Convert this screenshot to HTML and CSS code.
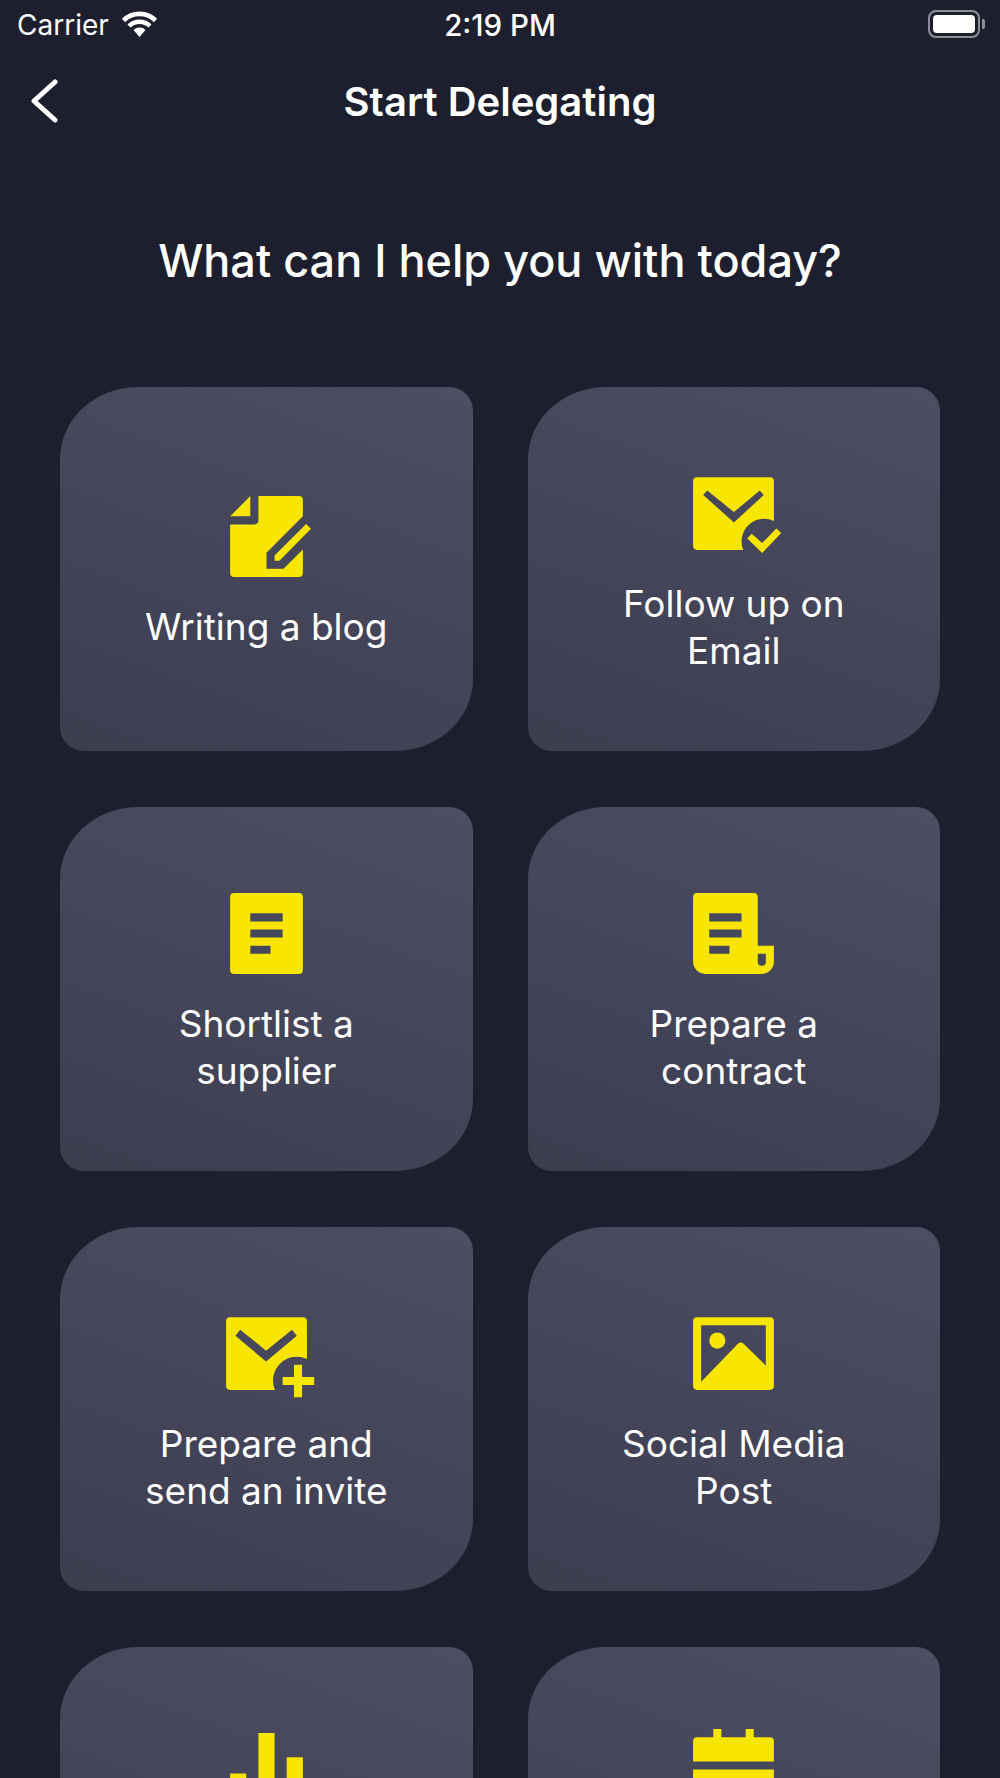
FILE: index.html
```html
<!DOCTYPE html>
<html lang="en">
<head>
    <meta charset="UTF-8">
    <meta name="viewport" content="width=device-width, initial-scale=1.0">
    <title>Start Delegating</title>
    <link rel="stylesheet" href="styles.css">
</head>
<body>
    <div class="status-bar">
        <div class="status-left">
            <span>Carrier</span>
            <svg class="wifi-icon" viewBox="0 0 37 26">
                <path d="M2.5 9.5a22.6 22.6 0 0 1 32 0" fill="none" stroke="#fff" stroke-width="4.8"/>
                <path d="M8 15a15 15 0 0 1 21 0" fill="none" stroke="#fff" stroke-width="4.4"/>
                <path d="M18.5 26l-6-7a8.5 8.5 0 0 1 12 0z" fill="#fff"/>
            </svg>
        </div>
        <span class="status-time">2:19 PM</span>
        <div class="battery">
            <div class="battery-level"></div>
        </div>
    </div>

    <nav class="navbar">
        <a class="back-btn" href="#" aria-label="Back">
            <svg viewBox="0 0 28 44"><path d="M25 3L4 22l21 19" fill="none" stroke="#fff" stroke-width="5" stroke-linecap="round" stroke-linejoin="round"/></svg>
        </a>
        <h1>Start Delegating</h1>
    </nav>

    <h2 class="question">What can I help you with today?</h2>

    <div class="card-grid">
        <div class="card">
            <svg class="card-icon" viewBox="0 0 24 24"><path d="M3 7L8 2V7z"/><path d="M10 2H20a1 1 0 0 1 1 1V7L12 16V20H16.2L21 15.2V21a1 1 0 0 1-1 1H4a1 1 0 0 1-1-1V9H9a1 1 0 0 0 1-1z"/><path d="M21.8 8.9L23 10.1 15.2 18H14V16.7z"/></svg>
            <p class="card-label">Writing a blog</p>
        </div>
        <div class="card">
            <svg class="card-icon" viewBox="0 0 24 24"><path fill-rule="evenodd" d="M3 3H21a1 1 0 0 1 1 1V13.84A5.6 5.6 0 0 0 14.41 21H3a1 1 0 0 1-1-1V4a1 1 0 0 1 1-1zM4.5 7.4L12.1 14.2 19.5 7.4 18.5 6.3 12.1 11.65 5.5 6.3z"/><path d="M15.4 18.2L16.5 17 19.1 19.3 22.6 15.7 23.8 16.8 19.1 21.8z"/></svg>
            <p class="card-label">Follow up on<br>Email</p>
        </div>
        <div class="card">
            <svg class="card-icon" viewBox="0 0 24 24"><path fill-rule="evenodd" d="M4 2H20a1 1 0 0 1 1 1V21a1 1 0 0 1-1 1H4a1 1 0 0 1-1-1V3a1 1 0 0 1 1-1zM8 7V9H16V7zM8 11V13H16V11zM8 15V17H13V15z"/></svg>
            <p class="card-label">Shortlist a<br>supplier</p>
        </div>
        <div class="card">
            <svg class="card-icon" viewBox="0 0 24 24"><path fill-rule="evenodd" d="M3 2H17a1 1 0 0 1 1 1V15H22V19a3 3 0 0 1-3 3H5a3 3 0 0 1-3-3V3a1 1 0 0 1 1-1zM6 7V9H14V7zM6 11V13H14V11zM6 15V17H11V15zM18 17V19a1 1 0 0 0 2 0V17z"/></svg>
            <p class="card-label">Prepare a<br>contract</p>
        </div>
        <div class="card">
            <svg class="card-icon" viewBox="0 0 24 24"><path fill-rule="evenodd" d="M3 3H21a1 1 0 0 1 1 1V13.36A5.9 5.9 0 0 0 14.07 21H3a1 1 0 0 1-1-1V4a1 1 0 0 1 1-1zM4.3 7.6L11.9 14 19.5 7.6 18.3 6.1 11.9 11.3 5.5 6.1z"/><path d="M16 17.8H18.8V14.8H20.8V17.8H23.8V19.8H20.8V22.8H18.8V19.8H16z"/></svg>
            <p class="card-label">Prepare and<br>send an invite</p>
        </div>
        <div class="card">
            <svg class="card-icon" viewBox="0 0 24 24"><path fill-rule="evenodd" d="M3 3H21a1 1 0 0 1 1 1V20a1 1 0 0 1-1 1H3a1 1 0 0 1-1-1V4a1 1 0 0 1 1-1zM4 5V19L13.1 9.6a1 1 0 0 1 1.4 0L20 15V5z"/><circle cx="8" cy="8.8" r="2"/></svg>
            <p class="card-label">Social Media<br>Post</p>
        </div>
        <div class="card">
            <svg class="card-icon" viewBox="0 0 24 24"><path d="M3 12H7V22H3zM10 2H14V22H10zM17 8H21V22H17z"/></svg>
            <p class="card-label card-label-cut"></p>
        </div>
        <div class="card">
            <svg class="card-icon" viewBox="0 0 24 24"><path d="M3 3H7V1H9V3H15V1H17V3H21a1 1 0 0 1 1 1V9H2V4a1 1 0 0 1 1-1zM2 11H22V21a1 1 0 0 1-1 1H3a1 1 0 0 1-1-1z"/></svg>
            <p class="card-label card-label-cut"></p>
        </div>
    </div>
</body>
</html>
```

FILE: styles.css
```css
:root {
    --bg-color: #1e1f2e;
    --text-color: #ffffff;
    --accent: #f8e600;
    --font-family: Inter, 'Noto Sans', 'Liberation Sans', sans-serif;
}

* {
    box-sizing: border-box;
    margin: 0;
    padding: 0;
}

html, body {
    height: 1778px;
    overflow: hidden;
}

body {
    font-family: var(--font-family);
    background-color: var(--bg-color);
    color: var(--text-color);
}

.status-bar {
    height: 50px;
    padding: 0 20px 0 17px;
    display: flex;
    align-items: center;
    justify-content: space-between;
    font-size: 28px;
    position: relative;
}

.status-left {
    display: flex;
    align-items: center;
    gap: 12px;
}

.wifi-icon {
    width: 37px;
    height: 26px;
    margin-top: -2px;
}

.status-time {
    position: absolute;
    left: 0;
    right: 0;
    text-align: center;
    font-size: 29.5px;
    font-weight: 500;
}

.battery {
    width: 52px;
    height: 28px;
    margin-top: -2px;
    padding: 3px;
    border: 2px solid #8e8e96;
    border-radius: 8px;
    position: relative;
}

.battery::after {
    content: '';
    position: absolute;
    right: -7px;
    top: 7px;
    width: 3px;
    height: 10px;
    background-color: #8e8e96;
    border-radius: 0 2px 2px 0;
}

.battery-level {
    height: 100%;
    background-color: #fff;
    border-radius: 4px;
}

.navbar {
    height: 102px;
    display: flex;
    align-items: center;
    justify-content: center;
    position: relative;
}

.navbar h1 {
    font-size: 40px;
    font-weight: 600;
}

.back-btn {
    position: absolute;
    left: 30px;
    top: 29px;
    width: 28px;
    height: 44px;
}

.back-btn svg {
    display: block;
    width: 100%;
    height: 100%;
}

.question {
    margin-top: 78px;
    height: 62px;
    line-height: 62px;
    text-align: center;
    font-size: 45px;
    font-weight: 500;
}

.card-grid {
    margin-top: 94.5px;
    padding: 0 60px;
    display: grid;
    grid-template-columns: 1fr 1fr;
    grid-auto-rows: 364px;
    column-gap: 55px;
    row-gap: 56px;
}

.card {
    display: flex;
    flex-direction: column;
    align-items: center;
    justify-content: center;
    gap: 19px;
    padding-top: 2px;
    background: linear-gradient(20deg, #3c3d4f, #4d4e63);
    border-radius: 78px 24px 78px 24px / 72px 24px 72px 24px;
}

.card-icon {
    width: 97px;
    height: 97px;
    fill: var(--accent);
    flex-shrink: 0;
}

.card-label {
    font-size: 37px;
    line-height: 46.5px;
    text-align: center;
}

/* les deux dernières cartes sortent de l'écran */
.card-label-cut {
    min-height: 93px;
}
```
